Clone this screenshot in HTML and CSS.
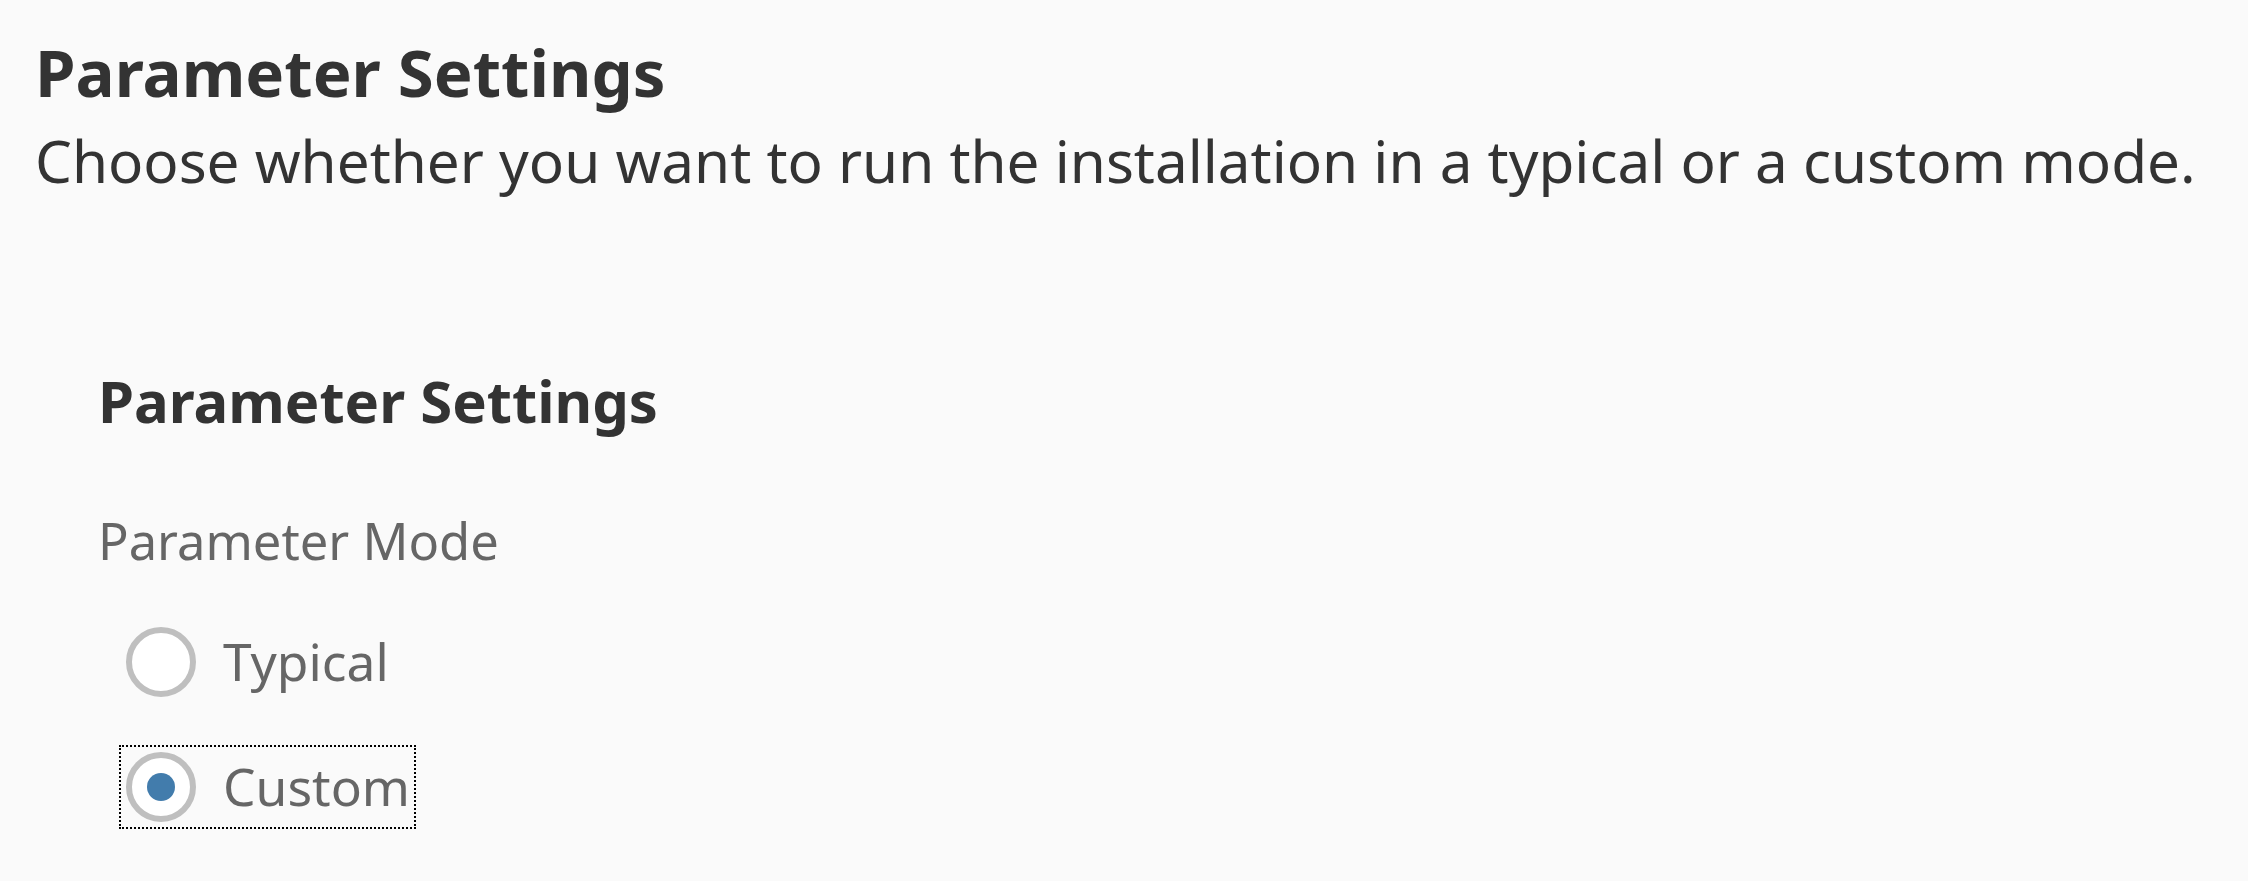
FILE: index.html
```html
<!DOCTYPE html>
<html lang="en">
<head>
<meta charset="utf-8">
<title>Parameter Settings</title>
<link rel="stylesheet" href="styles.css">
</head>
<body>
<div class="page">
  <header class="page-header">
    <h1 class="page-title">Parameter Settings</h1>
    <p class="page-subtitle">Choose whether you want to run the installation in a typical or a custom mode.</p>
  </header>
  <section class="form-section">
    <h2 class="section-title">Parameter Settings</h2>
    <div class="field-label">Parameter Mode</div>
    <div class="radio-group" role="radiogroup">
      <div class="radio-item" role="radio" aria-checked="false">
        <span class="radio-circle"></span>
        <span class="radio-text">Typical</span>
      </div>
      <div class="radio-item focused" role="radio" aria-checked="true">
        <span class="radio-circle checked"><span class="radio-dot"></span></span>
        <span class="radio-text">Custom</span>
      </div>
    </div>
  </section>
</div>
</body>
</html>
```
FILE: styles.css
```css
html, body {
  margin: 0;
  padding: 0;
  background: #fafafa;
}

body {
  font-family: "Noto Sans", "Open Sans", sans-serif;
  color: #333333;
}

.page {
  padding: 39px 0 0 35px;
}

.page-header {
  display: flex;
  flex-direction: column;
  gap: 28px;
}

.page-title {
  margin: 0;
  font-size: 65.3px;
  line-height: 65.3px;
  font-weight: 700;
  color: #333333;
}

.page-subtitle {
  margin: 0;
  font-size: 58.4px;
  line-height: 58.4px;
  font-weight: 400;
  color: #333333;
}

.form-section {
  margin: 181px 0 0 63px;
  display: flex;
  flex-direction: column;
}

.section-title {
  margin: 0;
  font-size: 58px;
  line-height: 58px;
  font-weight: 700;
  color: #333333;
}

.field-label {
  margin-top: 86px;
  font-size: 50.7px;
  line-height: 50.7px;
  color: #666666;
}

.radio-group {
  margin-top: 53.8px;
  padding-left: 21px;
  display: flex;
  flex-direction: column;
  align-items: flex-start;
  gap: 41px;
}

.radio-item {
  height: 84px;
  box-sizing: border-box;
  padding: 0 4px 0 5px;
  display: flex;
  align-items: center;
  gap: 27px;
  border: 2px dotted transparent;
}

.radio-item.focused {
  border-color: #000;
}

.radio-circle {
  width: 70px;
  height: 70px;
  box-sizing: border-box;
  border-radius: 50%;
  border: 6px solid #bfbfbf;
  background: #fff;
  display: flex;
  align-items: center;
  justify-content: center;
  flex: none;
}

.radio-dot {
  width: 28px;
  height: 28px;
  border-radius: 50%;
  background: #427cac;
}

.radio-text {
  font-size: 51.5px;
  line-height: 51.5px;
  color: #666666;
}
```
